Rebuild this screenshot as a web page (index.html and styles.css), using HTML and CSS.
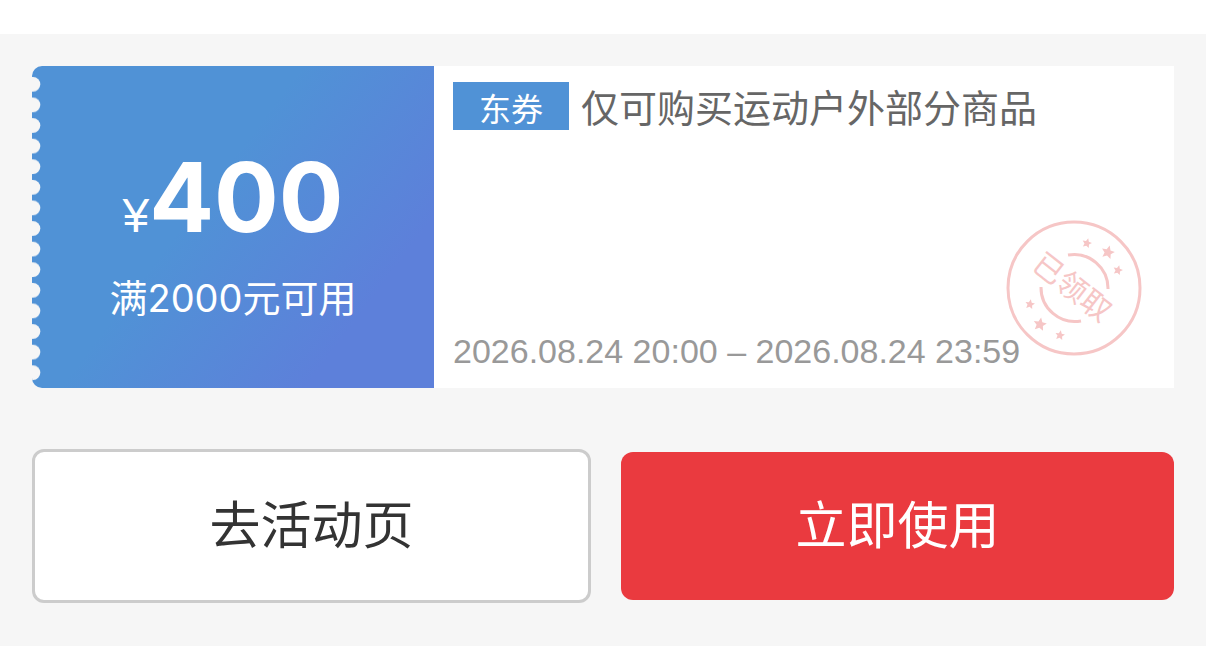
FILE: index.html
```html
<!DOCTYPE html>
<html lang="zh-CN">
<head>
  <meta charset="UTF-8" />
  <meta name="viewport" content="width=device-width, initial-scale=1.0"/>
  <title>优惠券</title>
  <link rel="stylesheet" href="styles.css">
</head>
<body>
  <main class="page">
    <section class="coupon">
      <div class="coupon-left">
        <svg class="teeth" width="10" height="322" aria-hidden="true">
          <defs>
            <pattern id="tooth" x="0" y="8" width="10" height="20.6" patternUnits="userSpaceOnUse">
              <path d="M0 3h1a7.3 7.3 0 0 1 0 14.6H0z" fill="#f6f6f6"/>
            </pattern>
          </defs>
          <rect y="8" width="10" height="309" fill="url(#tooth)"/>
        </svg>
        <p class="price"><span class="yen">¥</span><strong>400</strong></p>
        <p class="limit">满2000元可用</p>
      </div>

      <div class="coupon-right">
        <h1 class="title"><span class="tag">东券</span>仅可购买运动户外部分商品</h1>
        <p class="time">2026.08.24 20:00 – 2026.08.24 23:59</p>

        <svg class="stamp" viewBox="0 0 136 136" role="img" aria-label="已领取">
          <defs>
            <path id="star" d="M0-6 1.8-2 6-1.6 2.9 1.3 3.8 5.6 0 3.4-3.8 5.6-2.9 1.3-6-1.6-1.8-2z"/>
          </defs>
          <g fill="none" stroke="#f6c6c6" stroke-width="3">
            <circle cx="68" cy="68" r="66"/>
            <path d="M62 35A34 34 0 0 1 102 69"/>
            <path d="M35 67A34 34 0 0 0 75 101"/>
          </g>
          <g fill="#f6c6c6">
            <use href="#star" transform="translate(81 23) rotate(15) scale(.8)"/>
            <use href="#star" transform="translate(102 32) rotate(15) scale(1.1)"/>
            <use href="#star" transform="translate(112 50) rotate(15) scale(.8)"/>
            <use href="#star" transform="translate(24 84) rotate(10) scale(.8)"/>
            <use href="#star" transform="translate(34 104) rotate(10) scale(1.1)"/>
            <use href="#star" transform="translate(54 115) rotate(10) scale(.8)"/>
          </g>
          <text class="stamp-text" x="66" y="79" text-anchor="middle" transform="rotate(38 68 68)">已领取</text>
        </svg>
      </div>
    </section>

    <div class="actions">
      <button type="button" class="btn btn-plain">去活动页</button>
      <button type="button" class="btn btn-primary">立即使用</button>
    </div>
  </main>
</body>
</html>
```
FILE: styles.css
```css
* {
  margin: 0;
  padding: 0;
}

body {
  font-family: Inter, 'Noto Sans CJK SC', sans-serif;
  background: #fff;
  padding-top: 34px;
}

.page {
  background: #f6f6f6;
  padding: 32px 32px 43px;
}

.coupon {
  display: flex;
  background: #fff;
  border-radius: 10px 0 0 10px;
  overflow: hidden;
}

.coupon-left {
  position: relative;
  box-sizing: border-box;
  width: 402px;
  min-height: 322px;
  padding-top: 12px;
  flex-shrink: 0;
  display: flex;
  flex-direction: column;
  align-items: center;
  justify-content: center;
  color: #fff;
  background: linear-gradient(127deg, #5092d6 0%, #5092d6 42%, #5d80da 80%, #5d80da 100%);
}

/* perforated edge */
.teeth {
  position: absolute;
  left: 0;
  top: 0;
}

.price {
  display: flex;
  align-items: baseline;
  line-height: 110px;
}

.yen {
  font-family: 'Liberation Sans', Arial, sans-serif;
  font-size: 48px;
}

.price strong {
  font-size: 96px;
  font-weight: 700;
}

.limit {
  font-size: 38px;
  line-height: 54px;
}

.coupon-right {
  position: relative;
  flex: 1;
  display: flex;
  flex-direction: column;
  justify-content: space-between;
  padding: 16px 19px;
}

.title {
  display: flex;
  gap: 12px;
  font-size: 38px;
  font-weight: 400;
  line-height: 52px;
  color: #666;
}

.tag {
  box-sizing: border-box;
  width: 116px;
  height: 48px;
  font-size: 32px;
  line-height: 56px;
  text-align: center;
  color: #fff;
  background: #5092d6;
}

.time {
  font-family: 'Liberation Sans', Arial, sans-serif;
  font-size: 34px;
  line-height: 42px;
  color: #999;
}

/* "claimed" stamp over the card corner */
.stamp {
  position: absolute;
  right: 32px;
  bottom: 32px;
  width: 136px;
  height: 136px;
}

.stamp-text {
  font-size: 30px;
  fill: #f6c6c6;
}

.actions {
  display: flex;
  align-items: center;
  gap: 30px;
  margin-top: 61px;
}

.btn {
  box-sizing: content-box;
  flex: 1;
  font-family: inherit;
  font-size: 51px;
  line-height: 148px;
  border: none;
  border-radius: 12px;
  cursor: pointer;
}

.btn-plain {
  color: #333;
  background: #fff;
  border: 3px solid #ccc;
}

.btn-primary {
  color: #fff;
  background: #ea3a3f;
}
```
